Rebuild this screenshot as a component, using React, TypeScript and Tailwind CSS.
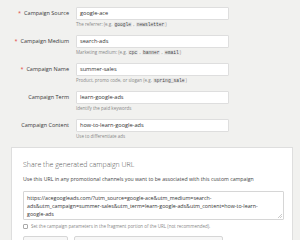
import React from "react";

const font = { fontFamily: '"Open Sans", "Liberation Sans", sans-serif' };

function Code({ children }: { children: React.ReactNode }) {
  return (
    <span className="rounded-[1px] bg-[#e6e6e6] px-[1px] text-[#444] text-[4.6px] font-[Liberation_Mono,monospace]">
      {children}
    </span>
  );
}

function Row({
  label,
  value,
  required,
  hint,
}: {
  label: string;
  value: string;
  required?: boolean;
  hint: React.ReactNode;
}) {
  return (
    <div className="grid grid-cols-[69px_153px] gap-x-[7px] mb-[7px]">
      <div className="flex h-[13px] items-center justify-end text-[5.5px] font-medium text-[#3a3a3a]">
        {required && <span className="mr-[3px] text-[#e2433b]">*</span>}
        <span>{label}</span>
      </div>
      <div>
        <div className="flex h-[13px] items-center rounded-[1px] border border-[#dedede] bg-white pl-[3px] text-[5.6px] text-[#333]">
          {value}
        </div>
        <div className="h-[8px] pt-[1px] text-[4.5px] leading-[7px] text-[#888]">{hint}</div>
      </div>
    </div>
  );
}

export default function App() {
  return (
    <div className="h-[240px] w-[300px] overflow-hidden bg-[#f1f1ef]" style={font}>
      <div className="pt-[7px]">
        <Row
          required
          label="Campaign Source"
          value="google-ace"
          hint={
            <>
              The referrer: (e.g. <Code>google</Code> , <Code>newsletter</Code>)
            </>
          }
        />
        <Row
          required
          label="Campaign Medium"
          value="search-ads"
          hint={
            <>
              Marketing medium: (e.g. <Code>cpc</Code> , <Code>banner</Code> , <Code>email</Code>)
            </>
          }
        />
        <Row
          required
          label="Campaign Name"
          value="summer-sales"
          hint={
            <>
              Product, promo code, or slogan (e.g. <Code>spring_sale</Code>)
            </>
          }
        />
        <Row label="Campaign Term" value="learn-google-ads" hint="Identify the paid keywords" />
        <Row label="Campaign Content" value="how-to-learn-google-ads" hint="Use to differentiate ads" />
      </div>
      <div className="ml-[11px] mt-[3px] w-[282px] border border-[#dedede] bg-white px-[11px] pt-[11px]">
        <div className="text-[7px] font-light leading-[11px] text-[#555]">Share the generated campaign URL</div>
        <div className="mt-[5px] text-[5.2px] leading-[8px] text-[#444]">
          Use this URL in any promotional channels you want to be associated with this custom campaign
        </div>
        <div className="relative mt-[8px] h-[29px] w-[261px] rounded-[1px] border border-[#d6d6d6] bg-white px-[3px] pt-[2px] text-[5.3px] leading-[8px] text-[#333]">
          <div className="whitespace-nowrap">https://acegoogleads.com/?utm_source=google-ace&amp;utm_medium=search-</div>
          <div className="whitespace-nowrap">ads&amp;utm_campaign=summer-sales&amp;utm_term=learn-google-ads&amp;utm_content=how-to-learn-</div>
          <div className="whitespace-nowrap">google-ads</div>
          <svg className="absolute bottom-[1px] right-[1px]" width="4" height="4" viewBox="0 0 4 4">
            <path d="M4 0L0 4M4 2L2 4" stroke="#aaa" strokeWidth="0.6" />
          </svg>
        </div>
        <div className="mt-[3px] flex items-center gap-[3px] text-[4.5px] text-[#888]">
          <span className="inline-block h-[5px] w-[5px] rounded-[1px] border border-[#aaa] bg-white" />
          <span>Set the campaign parameters in the fragment portion of the URL (not recommended).</span>
        </div>
        <div className="mt-[6px] flex gap-[6px]">
          <div className="h-[14px] w-[45px] rounded-[2px] border border-[#d6d6d6] bg-[#f7f7f7]" />
          <div className="h-[14px] w-[149px] rounded-[2px] border border-[#d6d6d6] bg-[#f7f7f7]" />
        </div>
      </div>
    </div>
  );
}
